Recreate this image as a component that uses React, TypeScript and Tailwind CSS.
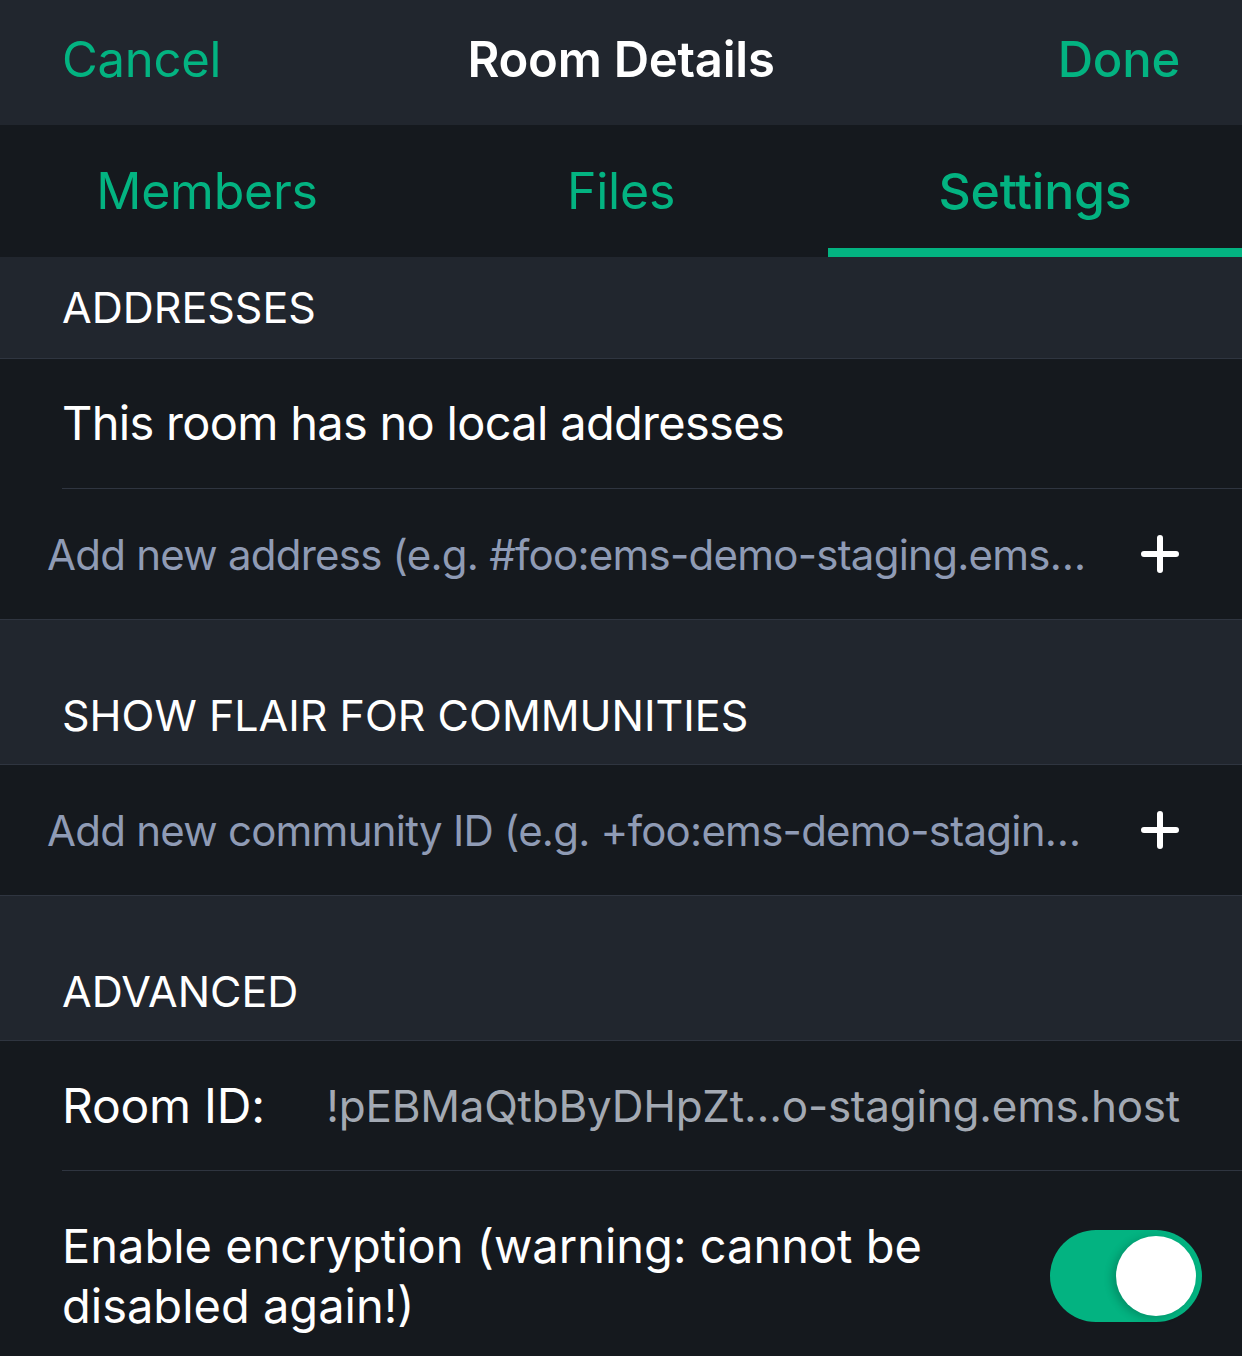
const green = 'text-[#03b381]';

function SectionHeader({ title, tall }: { title: string; tall?: boolean }) {
  return (
    <div
      className={`flex items-end bg-[#21262e] px-[62px] border-b border-[#2f3540] ${
        tall ? 'h-[145px] pb-[27px]' : 'h-[102px] pb-[29px]'
      }`}
    >
      <span className="text-[43px] leading-none text-white">{title}</span>
    </div>
  );
}

function PlusIcon() {
  return (
    <svg width="40" height="40" viewBox="0 0 40 40" className="shrink-0">
      <path d="M20 4v32M4 20h32" stroke="white" strokeWidth="6" strokeLinecap="round" />
    </svg>
  );
}

function AddRow({ placeholder }: { placeholder: string }) {
  return (
    <div className="flex h-[130px] items-center justify-between bg-[#15191e] pl-[47px] pr-[62px]">
      <span className="whitespace-nowrap text-[42px] tracking-[-0.018em] text-[#8f9bb5]">{placeholder}</span>
      <PlusIcon />
    </div>
  );
}

function Toggle() {
  return (
    <div className="flex h-[92px] w-[152px] shrink-0 items-center justify-end rounded-full bg-[#03b381] pr-[6px]">
      <div className="h-[80px] w-[80px] rounded-full bg-white shadow-[-4px_2px_8px_rgba(0,0,0,0.2)]" />
    </div>
  );
}

export default function App() {
  return (
    <div className="h-[1356px] w-[1242px] overflow-hidden bg-[#15191e] font-['Inter',sans-serif] antialiased">
      {/* nav bar */}
      <div className="flex h-[125px] items-center bg-[#21262e] px-[62px] pb-[6px] tracking-[-0.015em]">
        <span className={`flex-1 text-[49px] ${green}`}>Cancel</span>
        <span className="text-[49px] font-semibold text-white">Room Details</span>
        <span className={`flex-1 text-right text-[49px] font-medium ${green}`}>Done</span>
      </div>

      {/* tabs */}
      <div className="grid h-[132px] grid-cols-3 bg-[#15191e] tracking-[-0.015em]">
        <div className={`flex items-center justify-center text-[50px] ${green}`}>Members</div>
        <div className={`flex items-center justify-center text-[50px] ${green}`}>Files</div>
        <div className={`flex items-center justify-center border-b-[9px] border-[#03b381] pt-[9px] text-[50px] font-medium ${green}`}>
          Settings
        </div>
      </div>

      <SectionHeader title="ADDRESSES" />
      <div className="bg-[#15191e] pl-[62px]">
        <div className="flex h-[130px] items-center border-b border-[#2f3540]">
          <span className="text-[47px] tracking-[-0.015em] text-white">This room has no local addresses</span>
        </div>
      </div>
      <AddRow placeholder="Add new address (e.g. #foo:ems-demo-staging.ems…" />
      <div className="border-t border-[#2f3540]" />

      <SectionHeader title="SHOW FLAIR FOR COMMUNITIES" tall />
      <AddRow placeholder="Add new community ID (e.g. +foo:ems-demo-stagin…" />
      <div className="border-t border-[#2f3540]" />

      <SectionHeader title="ADVANCED" tall />
      <div className="bg-[#15191e] pl-[62px]">
        <div className="flex h-[130px] items-center border-b border-[#2f3540] pr-[62px] tracking-[-0.015em]">
          <span className="shrink-0 text-[48px] text-white">Room ID:</span>
          <span className="ml-auto text-[44px] text-[#a3a9b3]">!pEBMaQtbByDHpZt…o-staging.ems.host</span>
        </div>
        <div className="flex h-[209px] items-center justify-between pr-[40px]">
          <span className="max-w-[900px] text-[47px] leading-[60px] text-white">
            Enable encryption (warning: cannot be disabled again!)
          </span>
          <Toggle />
        </div>
      </div>
    </div>
  );
}
